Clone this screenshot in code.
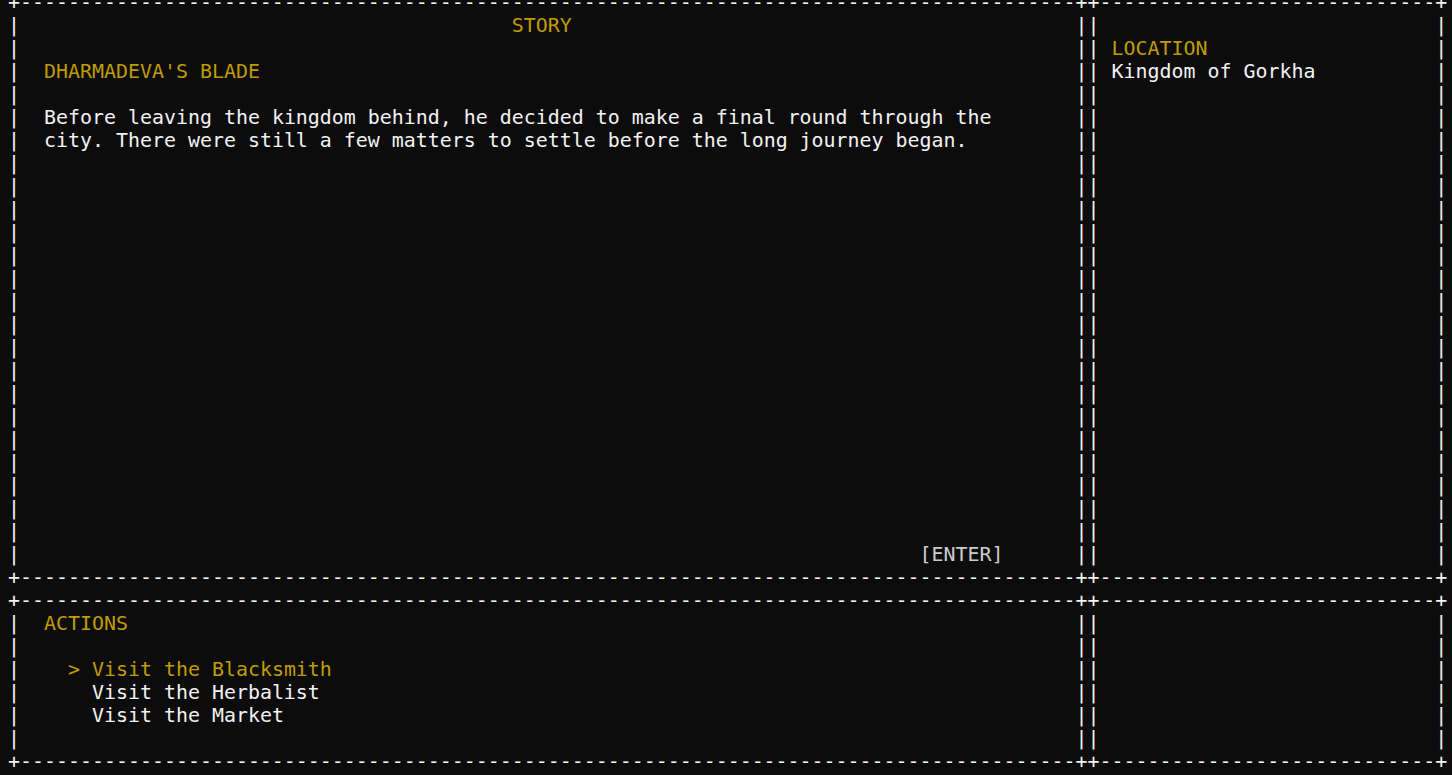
import React from "react";

type Tone = "gold" | "white" | "dim";
type Seg = { text: string; tone?: Tone };

const LEFT_W = 90;
const RIGHT_W = 30;

const toneClass: Record<Tone, string> = {
  gold: "text-[#c19c00]",
  white: "text-[#f2f2f2]",
  dim: "text-[#cccccc]",
};

const pad = (segs: Seg[], width: number): Seg[] => {
  const len = segs.reduce((n, s) => n + s.text.length, 0);
  return [...segs, { text: " ".repeat(Math.max(0, width - len)) }];
};

const at = (col: number, text: string, tone: Tone = "white"): Seg[] => [
  { text: " ".repeat(col) },
  { text, tone },
];

function Line({ segs }: { segs: Seg[] }) {
  return (
    <div className="h-[23px] leading-[23px] whitespace-pre">
      {segs.map((s, i) => (
        <span key={i} className={toneClass[s.tone ?? "white"]}>
          {s.text}
        </span>
      ))}
    </div>
  );
}

function Border() {
  const edge = (w: number) => "+" + "-".repeat(w - 2) + "+";
  return <Line segs={[{ text: edge(LEFT_W) + edge(RIGHT_W) }]} />;
}

function Row({ left = [], right = [] }: { left?: Seg[]; right?: Seg[] }) {
  return (
    <Line
      segs={[
        { text: "|" },
        ...pad(left, LEFT_W - 2),
        { text: "||" },
        ...pad(right, RIGHT_W - 2),
        { text: "|" },
      ]}
    />
  );
}

const story = [
  "Before leaving the kingdom behind, he decided to make a final round through the",
  "city. There were still a few matters to settle before the long journey began.",
];

const actions = ["Visit the Blacksmith", "Visit the Herbalist", "Visit the Market"];
const selected = 0;

export default function App() {
  return (
    <div className="h-screen overflow-hidden bg-[#0c0c0c] pl-[8px] font-['DejaVu_Sans_Mono',monospace] text-[19.93px]">
      <div className="-mt-[9px]">
        {/* story + location */}
        <Border />
        <Row left={at(41, "STORY", "gold")} />
        <Row right={at(1, "LOCATION", "gold")} />
        <Row left={at(2, "DHARMADEVA'S BLADE", "gold")} right={at(1, "Kingdom of Gorkha")} />
        <Row />
        {story.map((l, i) => (
          <Row key={i} left={at(2, l)} />
        ))}
        {Array.from({ length: 17 }).map((_, i) => (
          <Row key={"b" + i} />
        ))}
        <Row left={at(75, "[ENTER]", "dim")} />
        <Border />

        {/* actions */}
        <Border />
        <Row left={at(2, "ACTIONS", "gold")} />
        <Row />
        {actions.map((a, i) => (
          <Row
            key={a}
            left={
              i === selected
                ? at(4, "> " + a, "gold")
                : at(6, a)
            }
          />
        ))}
        <Row />
        <Border />
      </div>
    </div>
  );
}
